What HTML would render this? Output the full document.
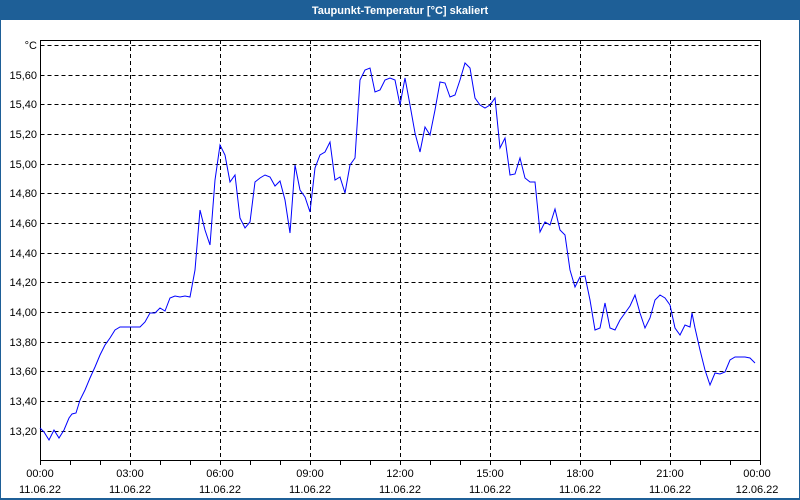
<!DOCTYPE html>
<html><head><meta charset="utf-8"><style>
html,body{margin:0;padding:0;width:800px;height:500px;overflow:hidden;background:#fff}
</style></head><body>
<svg width="800" height="500" xmlns="http://www.w3.org/2000/svg" font-family="Liberation Sans, sans-serif" font-size="11">
<rect x="0" y="0" width="800" height="500" fill="#1e5f97"/>
<rect x="1" y="20" width="798" height="478" fill="#fff"/>
<text x="400" y="14" fill="#fff" font-weight="bold" text-anchor="middle">Taupunkt-Temperatur [°C] skaliert</text>
<g stroke="#000" stroke-width="1" stroke-dasharray="4,3" fill="none">
<path d="M40.5 45.5H760M40.5 75.5H760M40.5 104.5H760M40.5 134.5H760M40.5 164.5H760M40.5 193.5H760M40.5 223.5H760M40.5 253.5H760M40.5 282.5H760M40.5 312.5H760M40.5 342.5H760M40.5 371.5H760M40.5 401.5H760M40.5 431.5H760"/>
<path d="M130.5 40V460M220.5 40V460M310.5 40V460M400.5 40V460M490.5 40V460M580.5 40V460M670.5 40V460"/>
</g>
<g stroke="#000" stroke-width="1" fill="none">
<path d="M40.5 40V460.5H760.5V40.5H40.5"/>
<path d="M70.5 460V465M100.5 460V465M130.5 460V465M160.5 460V465M190.5 460V465M220.5 460V465M250.5 460V465M280.5 460V465M310.5 460V465M340.5 460V465M370.5 460V465M400.5 460V465M430.5 460V465M460.5 460V465M490.5 460V465M520.5 460V465M550.5 460V465M580.5 460V465M610.5 460V465M640.5 460V465M670.5 460V465M700.5 460V465M730.5 460V465M760.5 460V465M40.5 460V465"/>
</g>
<g fill="#000" text-anchor="end">
<text x="37" y="49">°C</text>
<text x="37" y="79">15,60</text><text x="37" y="108">15,40</text><text x="37" y="138">15,20</text>
<text x="37" y="168">15,00</text><text x="37" y="197">14,80</text><text x="37" y="227">14,60</text>
<text x="37" y="257">14,40</text><text x="37" y="286">14,20</text><text x="37" y="316">14,00</text>
<text x="37" y="346">13,80</text><text x="37" y="375">13,60</text><text x="37" y="405">13,40</text>
<text x="37" y="435">13,20</text>
</g>
<g fill="#000" text-anchor="middle">
<text x="40" y="477">00:00</text><text x="40" y="493">11.06.22</text>
<text x="130" y="477">03:00</text><text x="130" y="493">11.06.22</text>
<text x="220" y="477">06:00</text><text x="220" y="493">11.06.22</text>
<text x="310" y="477">09:00</text><text x="310" y="493">11.06.22</text>
<text x="400" y="477">12:00</text><text x="400" y="493">11.06.22</text>
<text x="490" y="477">15:00</text><text x="490" y="493">11.06.22</text>
<text x="580" y="477">18:00</text><text x="580" y="493">11.06.22</text>
<text x="670" y="477">21:00</text><text x="670" y="493">11.06.22</text>
<text x="757" y="477">00:00</text><text x="757" y="493">12.06.22</text>
</g>
<polyline fill="none" stroke="#0000ff" stroke-width="1" points="40,428 44,432 49,440 54,430 59,438 64,430 69,418 72,414 76,413 80,400 85,390 90,378 95,367 100,355 105,345 110,338 115,330 120,327 130,327 140,327 145,322 150,313 155,313 160,308 165,311 170,298 175,296 180,297 185,296 190,297 195,270 200,210 205,230 210,245 215,180 220,145 225,155 230,182 235,175 240,218 245,228 250,222 255,182 260,178 265,175 270,177 275,186 280,181 285,200 290,233 295,165 300,190 305,197 310,212 315,168 320,155 325,152 330,142 335,180 340,177 345,193 350,165 355,158 360,80 365,70 370,68 375,92 380,90 385,80 390,78 395,80 400,105 405,78 410,105 415,133 420,152 425,127 430,135 435,110 440,82 445,83 450,97 455,95 460,80 465,63 470,68 475,98 480,105 485,108 490,105 495,98 500,148 505,138 510,175 515,174 520,158 525,178 530,182 535,182 540,232 545,222 550,225 555,209 560,230 565,235 570,270 575,287 580,277 585,276 590,300 595,330 600,328 605,303 610,328 615,330 620,320 625,313 630,306 635,295 640,313 645,328 650,318 655,300 660,295 665,298 670,305 675,328 680,335 685,325 690,327 692,313 695,328 700,350 705,370 710,385 715,373 720,374 725,372 730,360 735,357 745,357 750,358 755,363"/>
</svg>
</body></html>
